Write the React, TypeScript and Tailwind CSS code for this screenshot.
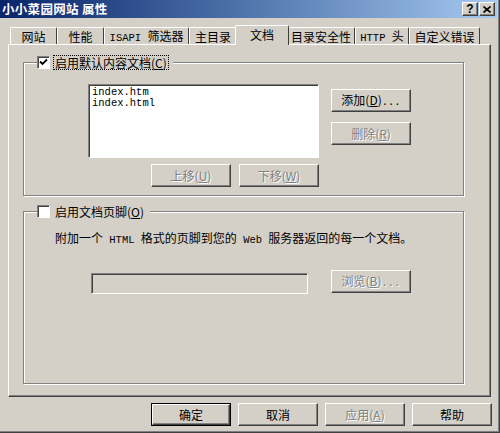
import React from "react";

const raised =
  "border border-t-white border-l-white border-r-[#404040] border-b-[#404040] shadow-[inset_-1px_-1px_0_#808080]";
const sunken =
  "border border-t-[#808080] border-l-[#808080] border-r-white border-b-white shadow-[inset_1px_1px_0_#404040]";
const dim = "text-[#808080] [text-shadow:1px_1px_0_#ffffff]";

// ascii runs look like the SimSun half-width glyphs
const A = ({ children }: { children: React.ReactNode }) => (
  <span className="font-['Liberation_Mono',monospace] text-[10.5px]">{children}</span>
);

const Btn = ({
  children,
  disabled,
  className = "",
}: {
  children: React.ReactNode;
  disabled?: boolean;
  className?: string;
}) => (
  <div
    className={`w-[80px] h-[23px] flex items-center justify-center bg-[#d4d0c8] ${raised} ${
      disabled ? dim : "text-black"
    } ${className}`}
  >
    <span className="whitespace-pre">{children}</span>
  </div>
);

const Check = ({ checked }: { checked?: boolean }) => (
  <div className={`w-[13px] h-[13px] bg-white flex items-center justify-center ${sunken}`}>
    {checked && (
      <svg width="9" height="9" viewBox="0 0 9 9">
        <path d="M1 3.5 L3.5 6 L8 1.5" stroke="#000" strokeWidth="1.8" fill="none" />
      </svg>
    )}
  </div>
);

const tabs = [
  { label: "网站", w: "w-[47px]" },
  { label: "性能", w: "w-[47px]" },
  {
    label: (
      <>
        <A>ISAPI </A>筛选器
      </>
    ),
    w: "w-[85px]",
  },
  { label: "主目录", w: "w-[48px]" },
  { label: "文档", w: "w-[54px]", active: true },
  { label: "目录安全性", w: "w-[68px]" },
  {
    label: (
      <>
        <A>HTTP </A>头
      </>
    ),
    w: "w-[54px]",
  },
  { label: "自定义错误", w: "w-[71px]" },
];

const Group = ({
  legend,
  checked,
  focused,
  className,
  children,
}: {
  legend: React.ReactNode;
  checked?: boolean;
  focused?: boolean;
  className: string;
  children: React.ReactNode;
}) => (
  <div
    className={`relative ml-[14px] w-[441px] border border-[#808080] shadow-[inset_1px_1px_0_#ffffff,1px_1px_0_#ffffff] ${className}`}
  >
    <div className="absolute left-[13px] -top-[8px] flex items-center bg-[#d4d0c8] pr-[4px]">
      <Check checked={checked} />
      <span
        className={`ml-[3px] px-[1px] leading-[13px] border ${
          focused ? "border-dotted border-black" : "border-transparent"
        }`}
      >
        {legend}
      </span>
    </div>
    {children}
  </div>
);

export default function App() {
  return (
    <div className="w-[500px] h-[433px] bg-[#d4d0c8] flex flex-col border-r border-b border-r-[#404040] border-b-[#404040] shadow-[inset_-1px_-1px_0_#808080] font-['Noto_Sans_CJK_SC',sans-serif] text-[12px] text-black overflow-hidden">
      {/* title bar */}
      <div className="w-[497px] h-[18px] bg-linear-to-r from-[#0a246a] to-[#a6caf0] flex items-center pl-[2px] pr-[2px]">
        <span className="text-white font-bold text-[12.5px] leading-[14px] tracking-[0.3px]">小小菜园网站 属性</span>
        <div className="ml-auto flex gap-[1px]">
          <div className={`w-[16px] h-[14px] bg-[#d4d0c8] ${raised} flex items-center justify-center font-bold text-[12px] leading-none font-['Liberation_Sans',sans-serif]`}>
            ?
          </div>
          <div className={`w-[16px] h-[14px] bg-[#d4d0c8] ${raised} flex items-center justify-center`}>
            <svg width="8" height="7" viewBox="0 0 8 7">
              <path d="M0.5 0.5 L7.5 6.5 M7.5 0.5 L0.5 6.5" stroke="#000" strokeWidth="1.7" />
            </svg>
          </div>
        </div>
      </div>

      {/* tabs */}
      <div className="mt-[7px] ml-[10px] h-[19px] flex items-end">
        {tabs.map((t, i) =>
          t.active ? (
            <div
              key={i}
              className={`${t.w} relative z-10 -mx-[2px] -mb-[1px] h-[20px] bg-[#d4d0c8] border-t border-l border-r border-t-white border-l-white border-r-[#404040] rounded-t-[2px] flex items-center justify-center pb-[1px]`}
            >
              <span className="whitespace-pre">{t.label}</span>
            </div>
          ) : (
            <div
              key={i}
              className={`${t.w} h-[17px] border-t border-l border-r border-t-white border-l-white border-r-[#404040] rounded-t-[2px] flex items-center justify-center pt-[1px]`}
            >
              <span className="whitespace-pre">{t.label}</span>
            </div>
          )
        )}
      </div>

      {/* tab page */}
      <div className={`ml-[8px] w-[483px] h-[353px] ${raised} border-t-white pt-[17px]`}>
        <Group
          legend={
            <>
              启用默认内容文档(<u>C</u>)
            </>
          }
          checked
          focused
          className="h-[134px]"
        >
          <div className="flex mt-[21px] ml-[64px]">
            <div className={`w-[231px] h-[74px] bg-white ${sunken} pl-[3px] pt-[2px] font-['Liberation_Mono',monospace] text-[10.5px] leading-[11px]`}>
              <div>index.htm</div>
              <div>index.html</div>
            </div>
            <div className="ml-[12px] mt-[5px] flex flex-col gap-[10px]">
              <Btn>
                添加(<u>D</u>)<A>...</A>
              </Btn>
              <Btn disabled>
                删除(<u>R</u>)
              </Btn>
            </div>
          </div>
          <div className="flex gap-[8px] mt-[6px] ml-[127px]">
            <Btn disabled>
              上移(<u>U</u>)
            </Btn>
            <Btn disabled>
              下移(<u>W</u>)
            </Btn>
          </div>
        </Group>

        <Group
          legend={
            <>
              启用文档页脚(<u>O</u>)
            </>
          }
          className="h-[173px] mt-[15px]"
        >
          <div className="mt-[19px] ml-[31px] leading-[14px] whitespace-pre">
            附加一个<A> HTML </A>格式的页脚到您的<A> Web </A>服务器返回的每一个文档。
          </div>
          <div className="flex items-start mt-[23px] ml-[67px]">
            <div className={`w-[217px] h-[21px] mt-[3px] bg-[#d4d0c8] ${sunken}`} />
            <Btn disabled className="ml-[23px]">
              浏览(<u>B</u>)<A>...</A>
            </Btn>
          </div>
        </Group>
      </div>

      {/* dialog buttons */}
      <div className="flex gap-[7px] mt-[6px] ml-[151px]">
        <div className="border border-black">
          <div className={`w-[78px] h-[21px] flex items-center justify-center ${raised}`}>确定</div>
        </div>
        <Btn>取消</Btn>
        <Btn disabled>
          应用(<u>A</u>)
        </Btn>
        <Btn>帮助</Btn>
      </div>
    </div>
  );
}
